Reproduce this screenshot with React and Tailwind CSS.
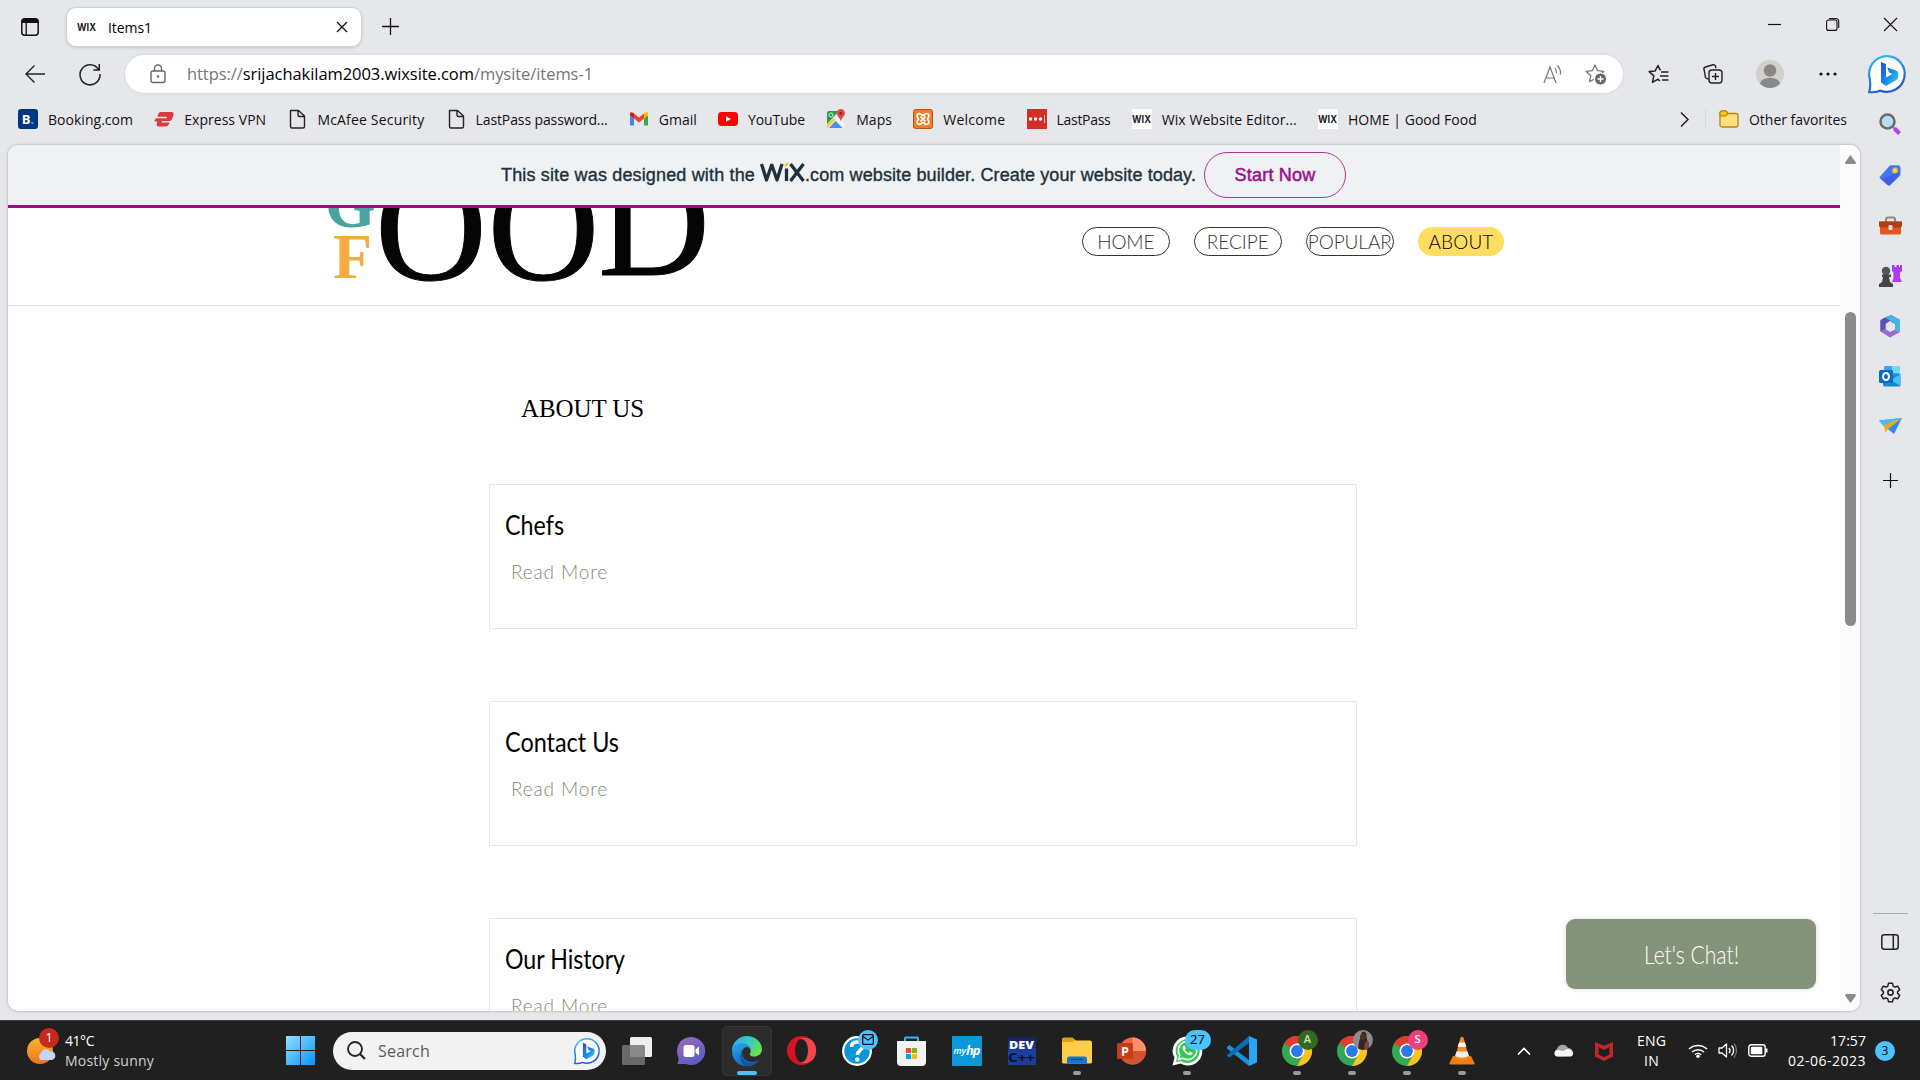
import React, { useLayoutEffect, useRef, useState } from "react";
import { FaWhatsapp } from "react-icons/fa";

const UI = "font-['Open_Sans','Noto_Sans',sans-serif]";
const GEO = "font-['Lato','Open_Sans',sans-serif]";

// Text run whose tracking (or horizontal scale) is adjusted to fill a given width.
function Fit({ w, squeeze = false, className = "", children }) {
  const ref = useRef(null);
  const [nat, setNat] = useState(null);
  useLayoutEffect(() => {
    const el = ref.current;
    setNat({ width: el.getBoundingClientRect().width, n: el.textContent.length });
  }, []);
  const inner = {};
  if (nat) {
    if (squeeze) inner.transform = `scaleX(${w / nat.width})`;
    else inner.letterSpacing = `${(w - nat.width) / nat.n}px`;
  }
  return (
    <span className={`block shrink-0 whitespace-nowrap ${className}`} style={{ width: w }}>
      <span ref={ref} className="inline-block origin-left" style={inner}>
        {children}
      </span>
    </span>
  );
}

function Svg({ w = 20, h = w, box, className = "", children }) {
  return (
    <svg width={w} height={h} viewBox={box || `0 0 ${w} ${h}`} fill="none" className={`block shrink-0 overflow-visible ${className}`}>
      {children}
    </svg>
  );
}

function WixMark({ white = false }) {
  return (
    <span className={`flex h-5 w-5 shrink-0 items-center justify-center ${white ? "bg-white" : ""}`}>
      <Fit w={19} squeeze className="text-[10px] leading-none font-bold text-[#222] font-['Inter',sans-serif]">WIX</Fit>
    </span>
  );
}

function BingBubble({ size }) {
  return (
    <Svg w={size} box="0 0 38 38">
      <defs>
        <linearGradient id="bingRing" x1="0" y1="0" x2=".4" y2="1"><stop stopColor="#2fc3f7" /><stop offset="1" stopColor="#2355d6" /></linearGradient>
        <linearGradient id="bingB" x1="0" y1="0" x2="1" y2="1"><stop stopColor="#1e50d8" /><stop offset=".55" stopColor="#1a8cf0" /><stop offset="1" stopColor="#3be0d0" /></linearGradient>
      </defs>
      <path d="M19 1.2a17.8 17.8 0 1 1-6.5 34.4c-3.2 1.6-7 1.9-11.3 1.5C2.500 33 2.500 29 1.800 24A17.800 17.800 0 0 1 19 1.200z" fill="#fff" stroke="url(#bingRing)" strokeWidth="2.200" />
      <path d="M13 7l5 2v13.500l6.500-3.500-3.500-1.500-1.800-5L28 15.500c2.200 1 2.500 2.600 2.200 5.500-.3 2.500-1 3.600-3 4.800L18 31l-5-3.500z" fill="url(#bingB)" />
    </Svg>
  );
}

const DocIcon = () => (
  <Svg>
    <path d="M3.500 1.500h8L17.500 7v10.500a1.500 1.500 0 0 1-1.500 1.500H5a1.500 1.500 0 0 1-1.500-1.500z M11 1.500V6a1.500 1.500 0 0 0 1.500 1.500h5" stroke="#222" strokeWidth="1.400" strokeLinejoin="round" />
  </Svg>
);

const bookmarks = [
  { label: "Booking.com", w: 85, icon: <span className="flex h-5 w-5 items-center justify-center rounded-[3px] bg-[#003580] text-[13px] leading-none font-bold text-white">B<span className="text-[#00b9f1]">.</span></span> },
  { label: "Express VPN", w: 82, icon: (
    <Svg><path d="M6.500 3h11c2 0 2.500 1.300 2 3l-1.500 4c-.6 1.400-1.400 2-3 2H8.200c-1 0-1 1.400 0 1.400h7.300c-.7 2.400-2 4-4 4H5c-2 0-2.800-1.200-2.200-3l.7-2H.3c.6-2.200 1.200-3.200 3-3.200h9c1 0 1-1.500 0-1.500H3.500C4.200 4.500 5 3 6.500 3z" fill="#da3940" /></Svg>) },
  { label: "McAfee Security", w: 107, icon: <DocIcon /> },
  { label: "LastPass password...", w: 132, icon: <DocIcon /> },
  { label: "Gmail", w: 38, icon: (
    <Svg><path d="M1 5v11.500h4V9.500L1 6z" fill="#4285f4" /><path d="M15 9.500v7h4V5z" fill="#34a853" /><path d="M15 4.500v5l4-3V5c0-2-2-2.500-4-.5z" fill="#fbbc04" /><path d="M5 4.500l5 4 5-4v5l-5 4-5-4z" fill="#ea4335" /><path d="M1 5v1.500l4 3v-5C3 2.500 1 3 1 5z" fill="#c5221f" /></Svg>) },
  { label: "YouTube", w: 57, icon: <Svg><rect y="3" width="20" height="14" rx="3.500" fill="#f00" /><path d="M8 7.200v5.600l5-2.800z" fill="#fff" /></Svg> },
  { label: "Maps", w: 36, icon: (
    <Svg><rect x="1" y="2" width="17" height="17" rx="2" fill="#e8eaed" /><path d="M1 4a2 2 0 0 1 2-2h10L1 15z" fill="#1e9e57" /><path d="M1 15l6-6 2 2-8 8z" fill="#fbcc2c" /><path d="M3 19l6.500-7 7 7z" fill="#4b8bf5" /><path d="M9 9l2-1.500L18 15v3z" fill="#f8fafc" /><circle cx="5" cy="6" r="2" stroke="#d5f0df" /><path d="M14.800 0a4.200 4.200 0 0 1 4.200 4.300c0 3-3.700 4.500-4.200 8.200-.5-3.700-4.200-5.200-4.200-8.200A4.200 4.200 0 0 1 14.800 0z" fill="#e04a3f" /><circle cx="14.800" cy="4.300" r="1.500" fill="#8c2a22" /></Svg>) },
  { label: "Welcome", w: 62, icon: (
    <Svg><rect x=".5" y=".5" width="19" height="19" rx="2" fill="#f07c26" stroke="#b5581a" /><path d="M6.500 4.500c2 0 2 2 3.500 2s1.500-2 3.500-2A2.500 2.500 0 0 1 16 7c0 1.600-1.500 1.800-1.500 3s1.500 1.400 1.500 3a2.500 2.500 0 0 1-2.500 2.500c-2 0-2-2-3.500-2s-1.500 2-3.500 2A2.500 2.500 0 0 1 4 13c0-1.600 1.500-1.800 1.500-3S4 8.600 4 7a2.500 2.500 0 0 1 2.500-2.500zM7.500 7.500l5 5M12.500 7.500l-5 5" stroke="#fff" strokeWidth="1.700" /></Svg>) },
  { label: "LastPass", w: 54, icon: <Svg><rect width="20" height="20" fill="#d32d27" /><circle cx="3.500" cy="10" r="1.700" fill="#fff" /><circle cx="8.500" cy="10" r="1.700" fill="#fff" /><circle cx="13.500" cy="10" r="1.700" fill="#fff" /><path d="M17.500 6v8" stroke="#f3b5b2" /></Svg> },
  { label: "Wix Website Editor...", w: 135, icon: <WixMark white /> },
  { label: "HOME | Good Food", w: 129, icon: <WixMark white /> },
];

function TitleBar() {
  return (
    <div className="flex h-[55px] shrink-0 items-start">
      <Svg w={18} className="mt-[18px] ml-[21px]">
        <rect x=".8" y=".8" width="16.400" height="16.400" rx="3" stroke="#111" strokeWidth="1.500" />
        <path d="M.8 5V3.500A2.700 2.700 0 0 1 3.500.8h11a2.700 2.700 0 0 1 2.700 2.700V5z" fill="#111" /><path d="M5.200 5v12" stroke="#111" strokeWidth="1.300" />
      </Svg>
      <div className="mt-[7px] ml-[27px] flex h-10 w-[296px] items-center rounded-[10px] border border-[#cfd1d6] bg-white pl-[9px] shadow-[0_1px_3px_rgba(0,0,0,0.15)]">
        <WixMark />
        <Fit w={44} className="ml-[12px] text-[14px]">Items1</Fit>
        <Svg w={10} className="ml-auto mr-[14px]"><path d="M0 0l10 10M10 0L0 10" stroke="#111" strokeWidth="1.300" /></Svg>
      </div>
      <Svg w={17} className="mt-[18px] ml-[20px]"><path d="M8.500 0v17M0 8.500h17" stroke="#111" strokeWidth="1.300" /></Svg>
      <div className="mt-[18px] mr-[23px] ml-auto flex items-center gap-[45px]">
        <Svg w={13}><path d="M0 6.500h13" stroke="#111" strokeWidth="1.200" /></Svg>
        <Svg w={13}><rect x=".6" y="2" width="10.400" height="10.400" rx="2" stroke="#111" strokeWidth="1.100" /><path d="M3 .6h7A2.600 2.600 0 0 1 12.700 3.200V10" stroke="#111" strokeWidth="1.100" /></Svg>
        <Svg w={13}><path d="M0 0l13 13M13 0L0 13" stroke="#111" strokeWidth="1.100" /></Svg>
      </div>
    </div>
  );
}

const STAR = "M10 1l2.600 5.700 6.200.7-4.600 4.200 1.300 6.200L10 14.700l-5.500 3.100 1.300-6.200L1.200 7.400l6.200-.7z";

function Toolbar() {
  return (
    <div className="flex h-[38px] shrink-0 items-center">
      <Svg w={20} className="ml-[25px]"><path d="M20 10H1M9.500 1.500L1 10l8.500 8.500" stroke="#222" strokeWidth="1.400" /></Svg>
      <Svg w={22} className="ml-[34px]"><path d="M19.500 6.500A10 10 0 1 0 21 11M20.300 1v6h-6" stroke="#222" strokeWidth="1.500" /></Svg>
      <div className="ml-[24px] flex h-[38px] w-[1498px] shrink-0 items-center rounded-full bg-white shadow-[0_0_3px_rgba(0,0,0,0.12)]">
        <Svg w={16} h={20} className="ml-[25px]"><rect x="1" y="7" width="14" height="11.500" rx="2" stroke="#666" strokeWidth="1.400" /><path d="M4.500 7V4.500a3.500 3.500 0 0 1 7 0V7" stroke="#666" strokeWidth="1.400" /><circle cx="8" cy="12.500" r="1.300" fill="#666" /></Svg>
        <Fit w={406} className="ml-[21px] text-[16.500px] text-[#757575]">https://<span className="text-black">srijachakilam2003.wixsite.com</span>/mysite/items-1</Fit>
        <Svg w={19} className="mr-[23px] ml-auto"><path d="M1 18L7 2l6 16M3 13h8" stroke="#777" strokeWidth="1.200" /><path d="M12 3a7 7 0 0 1 1.500 5M14.500.5a12 12 0 0 1 3 9" stroke="#777" strokeWidth="1.200" /></Svg>
        <Svg w={21} className="mr-[17px]"><path d={STAR} stroke="#777" strokeWidth="1.300" strokeLinejoin="round" /><circle cx="15.500" cy="15" r="6" fill="#666" stroke="#fff" strokeWidth="1" /><path d="M15.500 12v6M12.500 15h6" stroke="#fff" strokeWidth="1.400" /></Svg>
      </div>
      <Svg w={21} h={20} className="ml-[25px]"><path d="M12 17l-2-1.800-5.500 3.100 1.300-6.400L1.200 7.600l6-.7L10 1.500l2.400 4.800" stroke="#222" strokeWidth="1.500" strokeLinejoin="round" /><path d="M13 8h7.500M12 12h8.500M14 16h6.500" stroke="#222" strokeWidth="1.500" /></Svg>
      <Svg w={20} className="ml-[34px]"><path d="M5.500 15l-2-.6c-1-.4-1.500-1.200-1.200-2.200L1 5.500C.800 4.200 1.300 3.300 2.500 3L10 .8c1.200-.3 2 .2 2.500 1.200L13 4" stroke="#222" strokeWidth="1.400" /><rect x="6" y="6" width="13" height="13" rx="3" stroke="#222" strokeWidth="1.400" /><path d="M12.500 9v7M9 12.500h7" stroke="#222" strokeWidth="1.400" /></Svg>
      <Svg w={28} className="ml-[33px]"><circle cx="14" cy="14" r="14" fill="#d2d0ce" /><circle cx="14" cy="10.500" r="6.200" fill="#8a8886" /><path d="M4 23.800c1-4.300 5-5.800 10-5.800s9 1.500 10 5.800a14 14 0 0 1-20 0z" fill="#8a8886" /></Svg>
      <Svg w={18} h={4} className="ml-[35px]"><circle cx="2" cy="2" r="1.600" fill="#111" /><circle cx="9" cy="2" r="1.600" fill="#111" /><circle cx="16" cy="2" r="1.600" fill="#111" /></Svg>
      <div className="ml-[31px]"><BingBubble size={38} /></div>
    </div>
  );
}

function BookmarksBar() {
  return (
    <div className="flex h-[52px] w-[1860px] items-center pl-[18px] text-[14px] text-[#111]">
      {bookmarks.map((b) => (
        <div key={b.label} className="mr-[21.200px] flex shrink-0 items-center gap-[10px]">
          <span className="w-5 shrink-0">{b.icon}</span>
          <Fit w={b.w}>{b.label}</Fit>
        </div>
      ))}
      <Svg w={9} h={15} className="ml-auto"><path d="M1 .5l7 7-7 7" stroke="#222" strokeWidth="1.500" /></Svg>
      <div className="ml-[16px] h-5 w-px bg-[#d5d7dc]" />
      <Svg w={20} className="ml-[13px]"><path d="M1 4a2 2 0 0 1 2-2h4l2 2.500h8a2 2 0 0 1 2 2V16a2 2 0 0 1-2 2H3a2 2 0 0 1-2-2z" fill="#ffdf7c" stroke="#b8860b" strokeWidth="1.300" /><path d="M1 7h5.500L9 4.500 7 2H3a2 2 0 0 0-2 2z" fill="#f5c518" stroke="#b8860b" strokeWidth="1.100" /></Svg>
      <Fit w={98} className="ml-[10px] mr-[13px]">Other favorites</Fit>
    </div>
  );
}

function NavPill({ w, children, active }) {
  return (
    <div className={`flex h-[29px] items-center justify-center rounded-full ${GEO} text-[19px] font-light ${active ? "w-[86px] bg-[#ffdd60] text-black" : "w-[87.500px] border border-[#333] text-[#333]"}`}>
      <Fit w={w} className="leading-none">{children}</Fit>
    </div>
  );
}

function Card({ title, w }) {
  return (
    <div className="mb-[72.500px] h-[144.500px] w-[868px] shrink-0 border border-[#e4e5e8] pl-[15px]">
      <Fit w={w} squeeze className={`mt-[23px] ${GEO} text-[27px] leading-[34px] font-normal text-black`}>{title}</Fit>
      <Fit w={97} className={`mt-[17px] ml-[6px] ${GEO} text-[19px] leading-[26px] font-light text-[#7d8c73]`}>Read More</Fit>
    </div>
  );
}

function Page() {
  return (
    <div className="ml-2 flex h-[866px] w-[1852px] shrink-0 overflow-hidden rounded-[10px] bg-white shadow-[0_0_3px_rgba(0,0,0,0.3)]">
      <div className="relative flex h-full w-[1832px] shrink-0 flex-col overflow-hidden">
        <div className="flex h-[63px] shrink-0 items-center border-b-[3px] border-[#9a0f8e] bg-[#eff1f2] pl-[493px] font-['Liberation_Sans',sans-serif] text-[18px] text-[#20303c] [-webkit-text-stroke:0.35px]">
          <Fit w={254}>This site was designed with the</Fit>
          <Svg w={45} h={20} className="mb-[6px] ml-[5px]">
            <path d="M1.500 2l5 16 5.500-16M11.500 2l5.500 16L22 2M26.500 6.500V19M30.500 2l13 17M43.500 2l-13 17" stroke="#20303c" strokeWidth="3.300" strokeLinejoin="round" />
            <path d="M24.500 4c.3-2.500 1.500-3.500 4-4 .2 3-1 4-4 4.800z" fill="#ffc233" />
          </Svg>
          <Fit w={391}>.com website builder. Create your website today.</Fit>
          <div className="ml-[8px] flex h-[46px] w-[142px] items-center justify-center rounded-full border border-[#a8349e] text-[#9a0f8e]">
            <Fit w={81} className="[-webkit-text-stroke:0.5px]">Start Now</Fit>
          </div>
        </div>
        <div className="flex h-[98px] shrink-0 items-start overflow-hidden border-b border-[#dfe1e3]">
          <svg width="420" height="97" viewBox="308 208 420 97" className="ml-[300px] shrink-0 font-['Liberation_Serif',serif]">
            <text x="325" y="227" fontSize="65" fontWeight="700" fill="#49a3a1">G</text>
            <text x="333" y="277.500" fontSize="64" fontWeight="700" fill="#f3ab44">F</text>
            <g fontSize="155" fill="#050505" stroke="#050505" strokeWidth="1">
              <text x="375" y="279">O</text>
              <text x="487.500" y="279">O</text>
              <text x="598" y="275">D</text>
            </g>
          </svg>
          <div className="mt-[19px] ml-[354px] flex gap-[24.500px]">
            <NavPill w={57}>HOME</NavPill>
            <NavPill w={62}>RECIPE</NavPill>
            <NavPill w={84}>POPULAR</NavPill>
            <NavPill w={65} active>ABOUT</NavPill>
          </div>
        </div>
        <div className="flex h-[178px] shrink-0 items-start pl-[513px]">
          <Fit w={123} className="mt-[88px] font-['Liberation_Serif',serif] text-[25px] leading-[30px] text-black">ABOUT US</Fit>
        </div>
        <div className="flex flex-col pl-[481px]">
          <Card title="Chefs" w={59} />
          <Card title="Contact Us" w={114} />
          <Card title="Our History" w={120} />
        </div>
        <div className="absolute right-[24px] bottom-[22px] flex h-[70px] w-[250px] items-center justify-center rounded-[9px] bg-[#84937a] shadow-[0_0_5px_rgba(0,0,0,0.15)]">
          <Fit w={95} squeeze className={`${GEO} text-[25px] leading-none font-light text-white`}>Let's Chat!</Fit>
        </div>
      </div>
      <div className="flex h-full w-5 flex-col items-center bg-[#fcfcfc] pt-[10px] pb-[8px]">
        <Svg w={11} h={9}><path d="M5.500 0L11 7.500Q11 9 9.500 9h-8Q0 9 0 7.500z" fill="#8b8b8b" /></Svg>
        <div className="mt-[148px] h-[314px] w-[11px] rounded-full bg-[#8b8b8b]" />
        <Svg w={11} h={9} className="mt-auto"><path d="M5.500 9L11 1.500Q11 0 9.500 0h-8Q0 0 0 1.500z" fill="#8b8b8b" /></Svg>
      </div>
    </div>
  );
}

function SideBar() {
  return (
    <div className="-mt-[34px] ml-[2px] flex h-[908px] w-[56px] flex-col items-center">
      <Svg w={22} className="mt-[2px]"><circle cx="8.500" cy="8.500" r="7" fill="#bcdcf2" stroke="#6b6b6b" strokeWidth="2.500" /><path d="M14 14l2 2" stroke="#777" strokeWidth="2" /><path d="M15.500 15.500l5 5" stroke="#b63df0" strokeWidth="4" /></Svg>
      <Svg w={22} className="mt-[29px]"><path d="M1 12.500L10.500 2c.5-.6 1-.8 2-.8H19c1.500 0 2.500 1 2.500 2.300V10c0 1-.2 1.500-.8 2L11.500 21c-1 .9-2 .9-3 0L1 14.500c-.7-.7-.7-1.400 0-2z" fill="#4478f2" /><path d="M3 15l17-7v3L11 20.500c-1 .9-2 .9-3 0z" fill="#3e4ff0" opacity=".6" /><circle cx="16" cy="6.500" r="2" fill="#e8e0c0" stroke="#f6c81f" strokeWidth="1.800" /></Svg>
      <Svg w={23} h={20} className="mt-[30px]"><path d="M7 6V3.500A2 2 0 0 1 9 1.500h5a2 2 0 0 1 2 2V6" stroke="#8b8b8b" strokeWidth="2" /><rect x="1" y="5.500" width="21" height="13" rx="1.500" fill="#e2561f" /><path d="M0 5.500h23V10l-1 1.500H1L0 10z" fill="#b43d10" /><rect x="9.500" y="9" width="4" height="5" rx="1" fill="#ddd" /></Svg>
      <Svg w={23} className="mt-[28px]"><path d="M13 1h2.500v2h2V1H20v2h1V1h2v6l-2 1.500V14l2 4H13l1.500-4V8.500L13 7z" fill="#b13bf4" /><circle cx="7" cy="7" r="4.200" fill="#555" /><path d="M3 10.500h9V13h-2l1 5 3 2v3H0v-3l3-2 1-5H3z" fill="#444" /></Svg>
      <Svg w={22} className="mt-[28px]"><path d="M6 2.500L12 0l8.500 4.500v6L15 8.500 11 6 6.500 9v5l-5 2.500v-11z" fill="#6a5ed0" /><path d="M12 0l9 5v12l-5-2.500v-6L6 2.500z" fill="#42b4e8" /><path d="M1.500 16.500l5-2.500 4.500 3 5-2.500 5 2.500-10 5.500z" fill="#9b6ccc" /><path d="M1.500 5v11.500l5-2.500V8.500l4-3L6 2.500z" fill="#5a54b8" /></Svg>
      <Svg w={22} className="mt-[28px]"><rect x="5" y="1" width="15.500" height="15" rx="1.500" fill="#3aa5e8" /><rect x="13" y="1" width="7.500" height="7" fill="#6fdcff" /><path d="M4 11l17.500-2v11a1.500 1.500 0 0 1-1.500 1.500H6A2 2 0 0 1 4 20z" fill="#1a86d2" /><path d="M21.500 9v12L12 15z" fill="#45c2f5" /><rect x="0" y="5" width="14" height="13" rx="1.500" fill="#0a6cc4" /><ellipse cx="7" cy="11.500" rx="3" ry="3.500" stroke="#fff" strokeWidth="2" /></Svg>
      <Svg w={23} h={18} className="mt-[30px]"><path d="M0 3.500L23 1l-8 16-5-4z" fill="#2f8cee" /><path d="M0 3.500L23 1 5 10z" fill="#46bdf8" /><path d="M5 8l18-7L8.500 12.500 6.500 16z" fill="#f2a81b" /></Svg>
      <Svg w={15} className="mt-[38px]"><path d="M7.500 0v15M0 7.500h15" stroke="#111" strokeWidth="1.200" /></Svg>
      <div className="mt-auto h-px w-[35px] shrink-0 bg-[#a9abb0]" />
      <Svg w={18} h={16} className="mt-[20px]"><rect x=".8" y=".8" width="16.400" height="14.400" rx="2.500" stroke="#222" strokeWidth="1.500" /><path d="M12.300 1v14" stroke="#222" strokeWidth="1.500" /></Svg>
      <Svg w={21} box="0 0 24 24" className="mt-[32px] mb-[16px]">
        <path d="M9.700 1.500h4.600l.8 3.200 1.900 1.100 3.200-1 2.300 4-2.400 2.200v2l2.400 2.200-2.300 4-3.200-1-1.900 1.100-.8 3.200H9.700l-.8-3.200L7 18.200l-3.200 1-2.300-4 2.400-2.200v-2L1.500 8.800l2.300-4 3.200 1 1.900-1.100z" stroke="#222" strokeWidth="1.700" strokeLinejoin="round" /><circle cx="12" cy="12" r="3" stroke="#222" strokeWidth="1.800" />
      </Svg>
    </div>
  );
}

function EdgeIcon() {
  return (
    <Svg w={30}>
      <defs>
        <linearGradient id="edgeTop" x1="0" y1="0" x2="1" y2=".6"><stop stopColor="#2aa5e8" /><stop offset=".5" stopColor="#36c8c8" /><stop offset="1" stopColor="#66e04d" /></linearGradient>
        <linearGradient id="edgeLow" x1="0" y1="0" x2=".6" y2="1"><stop stopColor="#2ba8ec" /><stop offset="1" stopColor="#0a5fc0" /></linearGradient>
      </defs>
      <path d="M0 14A15 15 0 0 1 15 0c9 0 15 7 15 13 0 5-4 7.500-8 7.500-3 0-5-1.500-4-3 2-3 0-7-5-7C7 10.500 2 12 0 14z" fill="url(#edgeTop)" />
      <path d="M0 15C0 10 4 7 10 7c5 0 9 3 9 7-.5-2-2-3-4-3-3 0-5 3-5 6 0 6 5 9 10 9 3 0 5-.8 7.500-2.200A15 15 0 0 1 0 15z" fill="url(#edgeLow)" />
      <path d="M10.500 14C8 19 11 27 19 27c3 0 5.500-1 8-3.500A14 14 0 0 1 15 30C9 29 6 20 10.500 14z" fill="#1550a0" />
    </Svg>
  );
}

function ChromeIcon({ children }) {
  return (
    <div className="relative">
      <Svg w={30}>
        <circle cx="15" cy="15" r="15" fill="#34a853" />
        <path d="M15 15L2 7.500A15 15 0 0 1 28 7.500L15 7.600z" fill="#e33b2e" />
        <path d="M15 7.500h13A15 15 0 0 1 15 30l6.500-11.500z" fill="#fcc31e" />
        <circle cx="15" cy="15" r="7.500" fill="#fff" /><circle cx="15" cy="15" r="5.900" fill="#2b78e8" />
      </Svg>
      {children}
    </div>
  );
}

const badge = "absolute -top-[6px] left-4 flex h-5 w-5 items-center justify-center overflow-hidden rounded-full text-[11px] font-semibold";

const apps = [
  { id: "taskview", icon: <Svg w={30} h={28}><rect x="8" y="0" width="22" height="20" rx="1.500" fill="#efefef" /><rect x="0" y="8" width="23" height="20" rx="1.500" fill="#777" opacity=".85" /></Svg> },
  { id: "chat", icon: <Svg w={29} h={28}><defs><linearGradient id="chatG" x1="0" y1="0" x2=".5" y2="1"><stop stopColor="#9a6bb8" /><stop offset="1" stopColor="#5b5fc7" /></linearGradient></defs><path d="M14.500 0a14 14 0 1 1-5.500 27H0c1.500-1.500 1.600-3.500 1.300-7A14 14 0 0 1 14.500 0z" fill="url(#chatG)" /><rect x="6.500" y="8" width="11" height="12" rx="2.500" fill="#fff" /><path d="M18.500 12.500L22 9.500v9l-3.500-3z" fill="#fff" /></Svg> },
  { id: "edge", icon: <EdgeIcon />, active: true },
  { id: "opera", icon: <Svg w={29}><circle cx="14.500" cy="14.500" r="14.500" fill="#d81222" /><path d="M14.500 2c5 0 9 0 12 4a14.500 14.500 0 0 1 0 17c-3 3-8 5-12 4z" fill="#f2464c" /><ellipse cx="14.500" cy="14.500" rx="6.500" ry="11.500" fill="#202020" /></Svg> },
  { id: "help", icon: (
    <div className="relative">
      <Svg w={30}><circle cx="15" cy="15" r="13.800" fill="#0a96d6" stroke="#fff" strokeWidth="2.200" /><path d="M9.500 11c0-3.500 2.500-5 5.500-5s5.500 1.800 5.500 4.500c0 4-5 3.800-5.200 8.500" stroke="#fff" strokeWidth="3.600" /><circle cx="15.300" cy="23.500" r="2.200" fill="#fff" /></Svg>
      <div className={`${badge} bg-[#4cc2ff]`}><Svg w={12} h={11}><rect x=".7" y=".7" width="10.600" height="9.600" rx="1" stroke="#111" strokeWidth="1.300" /><path d="M1 2.500l5 3.500 5-3.500" stroke="#111" strokeWidth="1.200" /></Svg></div>
    </div>) },
  { id: "store", icon: <Svg w={29} h={30}><path d="M8 7V2.500a1 1 0 0 1 1-1h11a1 1 0 0 1 1 1V7" stroke="#35b8f1" strokeWidth="2" /><path d="M0 5h29v21a4 4 0 0 1-4 4H4a4 4 0 0 1-4-4z" fill="#f3f3f3" /><rect x="9" y="12" width="5" height="5" fill="#f25022" /><rect x="15" y="12" width="5" height="5" fill="#7fba00" /><rect x="9" y="18" width="5" height="5" fill="#00a4ef" /><rect x="15" y="18" width="5" height="5" fill="#ffb900" /></Svg> },
  { id: "myhp", icon: <div className="flex h-[30px] w-[30px] items-center justify-center rounded-[1px] bg-[#0a98da] text-white italic"><span className="text-[9px] font-semibold">my</span><span className="text-[13px] leading-none font-bold tracking-[-1px]">hp</span></div> },
  { id: "devcpp", icon: <div className="flex h-7 w-7 flex-col items-center bg-linear-to-b from-[#16205c] via-[#1a3fa0] to-[#1c3d90] leading-none"><Fit w={25} squeeze className="mt-[2px] text-[11px] font-extrabold text-white">DEV</Fit><Fit w={27} squeeze className="mt-[1px] text-[13px] font-bold text-[#081238]">C++</Fit></div> },
  { id: "explorer", dot: true, icon: <Svg w={30} h={27}><path d="M0 2A1.500 1.500 0 0 1 1.500.5h9L14 3.500V8H0z" fill="#e0a010" /><path d="M0 5h10l3-1.500h15A2 2 0 0 1 30 5.500V25a1.500 1.500 0 0 1-1.500 1.500h-27A1.500 1.500 0 0 1 0 25z" fill="#ffcd48" /><path d="M5 26.500V22a2.500 2.500 0 0 1 2.500-2.500h15A2.500 2.500 0 0 1 25 22v4.500z" fill="#1577d2" /><path d="M9 22.500h12" stroke="#0d4f94" strokeWidth="1.400" /></Svg> },
  { id: "powerpoint", icon: <Svg w={29} h={28}><circle cx="15.500" cy="14" r="13.500" fill="#ed6c47" /><path d="M15.500 14V.5A13.500 13.500 0 0 1 29 14z" fill="#ff8f6b" /><path d="M3 19l12.500-5H29a13.500 13.500 0 0 1-26 5z" fill="#d35230" /><rect x="0" y="6" width="16" height="16" rx="1.500" fill="#c43e1c" /><text x="4" y="18.500" fontSize="12.500" fontWeight="700" fill="#fff">P</text></Svg> },
  { id: "whatsapp", dot: true, icon: (
    <div className="relative">
      <Svg w={30}><path d="M15.500.5a14.500 14.500 0 1 1-7 27L.5 29.500l2-7.500A14.500 14.500 0 0 1 15.500.5z" fill="#fff" /><path d="M15.500 3a12 12 0 1 1-6.500 22l-5 1.300L5.300 21A12 12 0 0 1 15.500 3z" fill="#35c552" /></Svg>
      <FaWhatsapp className="absolute top-[3px] left-[4px] h-[23px] w-[23px] text-white" />
      <div className="absolute -top-[6px] left-[13px] flex h-5 w-[26px] items-center justify-center rounded-full bg-[#4cc2ff] text-[13px] text-black">27</div>
    </div>) },
  { id: "vscode", icon: <Svg w={30}><path d="M0 11l2.500-2L22 24v6L0 12.500z" fill="#1d8fd8" /><path d="M0 19L22 0v7L2.500 21.500 0 20z" fill="#0a6db5" /><path d="M22 0l8 3.500v23L22 30z" fill="#28a5f3" /></Svg> },
  { id: "chrome-a", dot: true, icon: <ChromeIcon><div className={`${badge} bg-[#33691e] text-[#c8e6b0]`}>A</div></ChromeIcon> },
  { id: "chrome-photo", dot: true, icon: <ChromeIcon><div className={`${badge} bg-[#8b8b8b]`}><Svg w={20}><path d="M9 2c4-1 5 2 4.500 5l3 13H5l1-8z" fill="#33261f" /><circle cx="10" cy="7" r="3" fill="#4c3328" /><path d="M12 12h4v8h-5z" fill="#80403e" /></Svg></div></ChromeIcon> },
  { id: "chrome-s", dot: true, icon: <ChromeIcon><div className={`${badge} bg-[#ec407a] text-white`}>S</div></ChromeIcon> },
  { id: "vlc", dot: true, icon: <Svg w={26} h={29}><path d="M4 20h18l3.500 7a1 1 0 0 1-1 1.500h-23A1 1 0 0 1 .5 27z" fill="#f07c12" /><path d="M11.500 1.500Q13 0 14.500 1.500L20 22q-7 4-14 0z" fill="#f58a1f" /><path d="M10 6.500h6l1.300 4.500H8.700z" fill="#f2f2f2" /><path d="M7.500 15.500h11L20 20q-7 3.500-14 0z" fill="#eee" /></Svg> },
];

function Taskbar() {
  return (
    <div className="flex h-[60px] w-full shrink-0 items-center border-t border-[#3c3e40] bg-[#202020] text-white">
      <div className="relative ml-[27px] mt-[1px] h-[28px] w-[28px] shrink-0">
        <Svg w={28}><defs><linearGradient id="sun" x1="0" y1="0" x2="0" y2="1"><stop stopColor="#f7b733" /><stop offset="1" stopColor="#f0701c" /></linearGradient></defs><circle cx="13" cy="14" r="13" fill="url(#sun)" /><path d="M14 23a4 4 0 0 1 0-7 5 5 0 0 1 9-1.500 4.200 4.200 0 0 1 2 8.500z" fill="#c3d6f7" /></Svg>
        <div className="absolute -top-[9px] left-[12px] flex h-5 w-5 items-center justify-center rounded-full bg-[#c42b1c] text-[12.500px]">1</div>
      </div>
      <div className="ml-[10px] flex h-10 shrink-0 flex-col text-[14px] leading-5">
        <Fit w={29}>41°C</Fit>
        <Fit w={89} className="text-[#d0d0d0]">Mostly sunny</Fit>
      </div>
      <Svg w={29} className="ml-[132px]"><defs><linearGradient id="win" x1="0" y1="0" x2="1" y2="1"><stop stopColor="#8fe0ff" /><stop offset="1" stopColor="#0a94ff" /></linearGradient></defs><path d="M0 0h14v14H0zM15 0h14v14H15zM0 15h14v14H0zM15 15h14v14H15z" fill="url(#win)" /></Svg>
      <div className="ml-[18px] flex h-[38px] w-[273px] shrink-0 items-center rounded-full bg-[#f2f2f2]">
        <Svg w={19} className="ml-[14px]"><circle cx="8" cy="8" r="7" stroke="#222" strokeWidth="1.800" /><path d="M13 13l5 5" stroke="#222" strokeWidth="2.200" /></Svg>
        <Fit w={52} className="ml-[12px] text-[16px] text-[#5a5a5a]">Search</Fit>
        <div className="mr-[6px] ml-auto"><BingBubble size={26} /></div>
      </div>
      <div className="ml-[3px] flex h-[59px] shrink-0">
        {apps.map((a) => (
          <div key={a.id} className="relative flex h-full w-[55px] items-center justify-center">
            <div className={`flex h-[50px] w-[50px] items-center justify-center rounded-[5px] ${a.active ? "border border-[#363636] bg-[#2c2c2c]" : ""}`}>{a.icon}</div>
            {a.active && <div className="absolute bottom-[5px] h-1 w-5 rounded-full bg-[#4cc2ff]" />}
            {a.dot && <div className="absolute bottom-[5px] h-1 w-2 rounded-full bg-[#9a9a9a]" />}
          </div>
        ))}
      </div>
      <Svg w={14} h={8} className="ml-[28px]"><path d="M1 7.500L7 1.500l6 6" stroke="#fff" strokeWidth="1.700" /></Svg>
      <Svg w={20} h={13} className="ml-[23px]"><path d="M4 12.500a4 4 0 0 1-1-7.500 6 6 0 0 1 11-1 4.500 4.500 0 0 1 3 8z" fill="#a6a6a6" /><path d="M3 12.500a3.300 3.300 0 0 1 1-6.500l5 1 4-2a5 5 0 0 1 5 2 3.200 3.200 0 0 1-1 5.500z" fill="#f5f5f5" /></Svg>
      <Svg w={18} h={20} className="ml-[21px]"><path d="M0 1l9 4 9-4v14.500L9 20l-9-4.500z" fill="#c0272d" /><path d="M3.500 6l5.500 2.800L14.500 6v7.500L9 16.300l-5.500-2.800z" fill="#202020" /><path d="M5.500 3.300L9 5l3.500-1.700V7L9 8.800 5.500 7z" fill="#c0272d" /></Svg>
      <div className="ml-[24px] flex h-10 shrink-0 flex-col items-center text-[14px] leading-5">
        <Fit w={29}>ENG</Fit>
        <Fit w={15}>IN</Fit>
      </div>
      <Svg w={20} h={15} className="ml-[22px]"><path d="M1 6a13 13 0 0 1 18 0M4 9a8.800 8.800 0 0 1 12 0M6.800 11.700a4.800 4.800 0 0 1 6.400 0" stroke="#fff" strokeWidth="1.500" /><circle cx="10" cy="13.300" r="1.800" fill="#fff" /></Svg>
      <Svg w={20} h={15} className="ml-[10px]"><path d="M1 5h3l4.500-4v13L4 10H1z" stroke="#fff" strokeWidth="1.300" strokeLinejoin="round" /><path d="M11 5a4 4 0 0 1 0 5M13.500 2.500a7 7 0 0 1 0 10" stroke="#fff" strokeWidth="1.400" /><path d="M16 .5a11 11 0 0 1 0 14" stroke="#777" strokeWidth="1.300" /></Svg>
      <Svg w={20} h={13} className="ml-[10px]"><rect x=".8" y=".8" width="16.400" height="11.400" rx="2.500" stroke="#fff" strokeWidth="1.400" /><rect x="2.800" y="2.800" width="11.500" height="7.400" rx="1" fill="#fff" /><path d="M18.500 4.500v4" stroke="#fff" strokeWidth="2" /></Svg>
      <div className="ml-[20px] flex h-10 w-[78px] shrink-0 flex-col items-end text-[14px] leading-5">
        <Fit w={36}>17:57</Fit>
        <Fit w={78}>02-06-2023</Fit>
      </div>
      <div className="ml-[9px] flex h-5 w-5 shrink-0 items-center justify-center rounded-full bg-[#4cc2ff] text-[12px] text-black">3</div>
    </div>
  );
}

export default function App() {
  return (
    <div className={`flex h-[1080px] w-[1920px] flex-col overflow-hidden bg-[#e6e7eb] text-black ${UI}`}>
      <TitleBar />
      <Toolbar />
      <BookmarksBar />
      <div className="flex h-[875px] shrink-0">
        <Page />
        <SideBar />
      </div>
      <Taskbar />
    </div>
  );
}
